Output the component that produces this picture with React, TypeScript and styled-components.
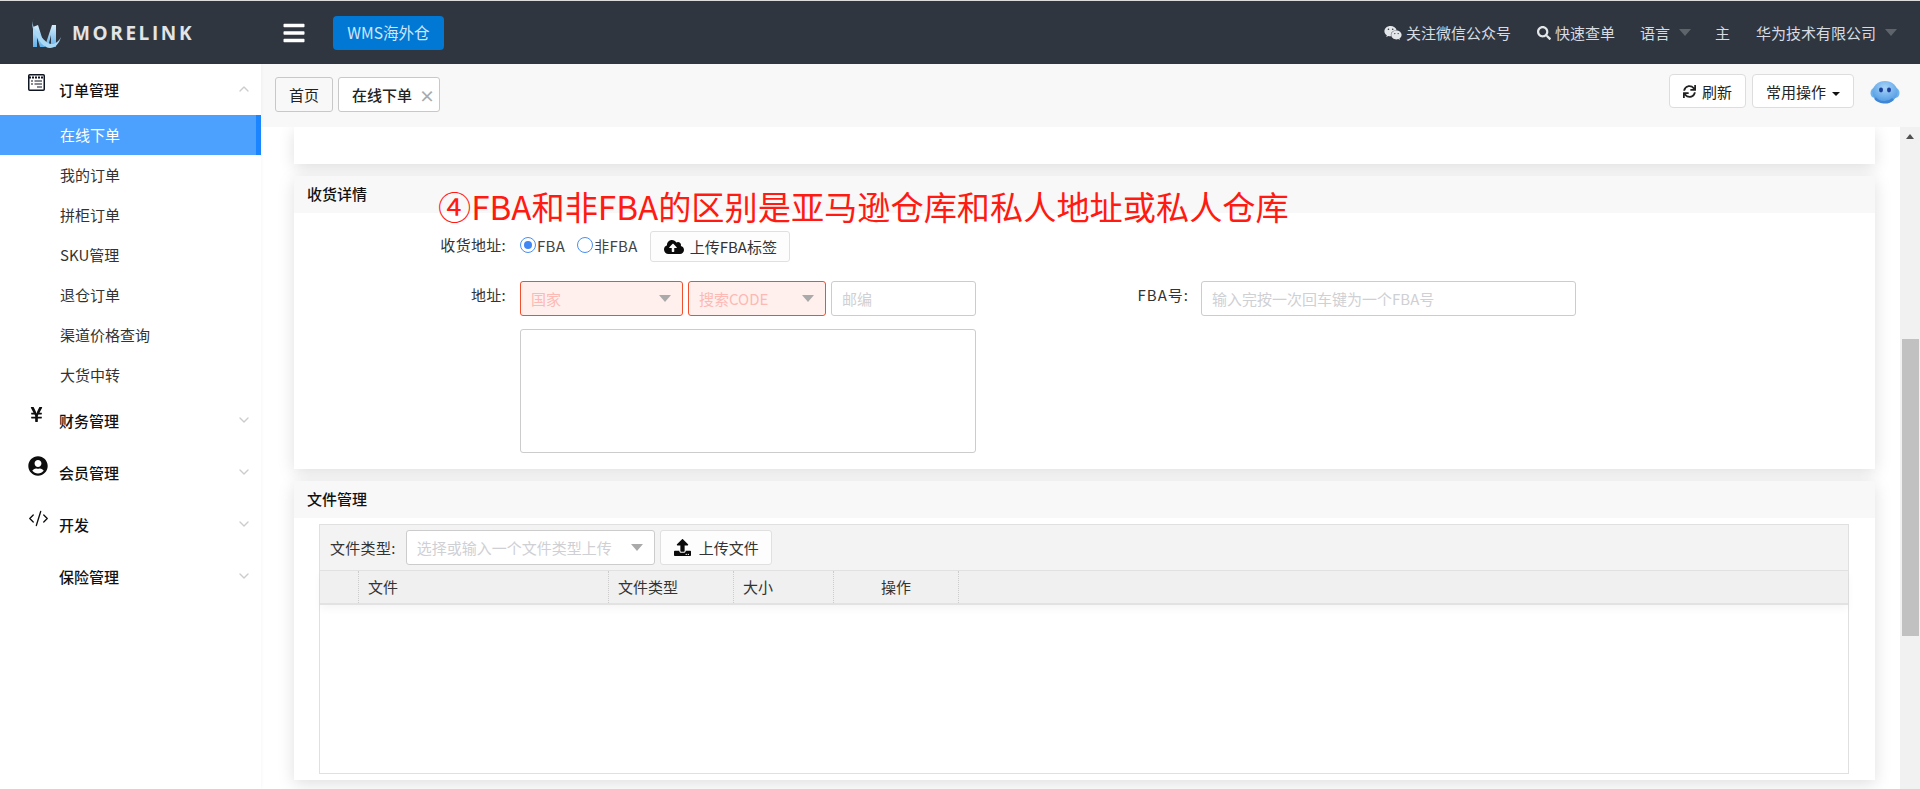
import { FC, ReactNode } from "react";
import styled, { createGlobalStyle } from "styled-components";
import {
  FaBars,
  FaCloudUploadAlt,
  FaSearch,
  FaSync,
  FaUpload,
  FaUserCircle,
  FaWeixin,
  FaYenSign,
} from "react-icons/fa";
import { ChevronDown, ChevronUp, CodeXml } from "lucide-react";

const GlobalStyle = createGlobalStyle`
  html, body {
    margin: 0;
    padding: 0;
    background: #fff;
  }
  body {
    font-family: "Noto Sans CJK SC", "Liberation Sans", sans-serif;
    font-size: 15px;
    color: #333;
    overflow: hidden;
  }
  * {
    box-sizing: border-box;
  }
`;

const Page = styled.div`
  width: 1920px;
  height: 789px;
  display: flex;
  flex-direction: column;
  overflow: hidden;
`;

const TopBar = styled.header`
  height: 64px;
  flex: none;
  display: flex;
  align-items: center;
  background: #2f3640;
  border-top: 1px solid #dcdcdc;
  color: #d8dce2;
`;

const Brand = styled.div`
  width: 282px;
  display: flex;
  align-items: center;
  padding-left: 30px;
  gap: 10px;
`;

const BrandName = styled.span`
  font-family: "Open Sans", "Liberation Sans", sans-serif;
  font-weight: 700;
  font-size: 19px;
  letter-spacing: 2.6px;
  line-height: 24px;
  color: #e2e4e6;
`;

const Burger = styled.div`
  width: 51px;
  display: flex;
  color: #fff;
  font-size: 24px;
`;

const WarehouseButton = styled.div`
  width: 111px;
  height: 34px;
  line-height: 33px;
  font-size: 15.6px;
  text-align: center;
  background: #0078d4;
  border-radius: 4px;
  color: #cfe6fb;
`;

const TopLinks = styled.nav`
  margin-left: auto;
  display: flex;
  align-items: center;
  padding-right: 23px;
`;

const TopLink = styled.span<{ $gap: number }>`
  display: flex;
  align-items: center;
  gap: 4px;
  line-height: 22px;
  margin-left: ${(p) => p.$gap}px;
  white-space: nowrap;

  svg {
    color: #e4e7ea;
  }
`;

const TopCaret = styled.i`
  width: 0;
  height: 0;
  margin-left: 5px;
  border-left: 6px solid transparent;
  border-right: 6px solid transparent;
  border-top: 7px solid #5f646b;
`;

const Body = styled.div`
  flex: 1;
  display: flex;
  min-height: 0;
`;

const SideNav = styled.aside`
  width: 261px;
  flex: none;
  background: #fff;
  box-shadow: 1px 0 3px rgba(0, 0, 0, 0.03);
  z-index: 1;
`;

const GroupRow = styled.div<{ $first?: boolean }>`
  height: ${(p) => (p.$first ? 51 : 52)}px;
  display: flex;
  align-items: center;
  padding: 0 9px 0 28px;
  color: #111;
  font-weight: 500;
  line-height: 20px;

  > svg {
    color: #ccc;
    margin-left: auto;
    margin-bottom: 2px;
  }
`;

const GroupIcon = styled.span`
  width: 31px;
  height: 20px;
  flex: none;
  display: flex;
  align-items: center;
  margin-bottom: 14px;
  color: #0d0d0d;
`;

const NavItem = styled.div<{ $active?: boolean }>`
  height: 40px;
  line-height: 40px;
  padding-left: 60px;
  color: ${(p) => (p.$active ? "#fff" : "#333")};
  background: ${(p) => (p.$active ? "#4ba1fd" : "transparent")};
  border-right: ${(p) => (p.$active ? "5px solid #1a85ff" : "none")};
`;

const Main = styled.main`
  flex: 1;
  min-width: 0;
  display: flex;
  flex-direction: column;
`;

const TabBar = styled.div`
  height: 63px;
  flex: none;
  display: flex;
  align-items: flex-start;
  padding: 13px 20px 0 14px;
  background: #f8f8f8;
`;

const Tab = styled.div<{ $active?: boolean }>`
  height: 35px;
  display: flex;
  align-items: center;
  gap: 7px;
  padding: 0 ${(p) => (p.$active ? 4 : 13)}px 0 13px;
  margin-right: 5px;
  border: 1px solid #c8c8c8;
  border-radius: 3px;
  background: ${(p) => (p.$active ? "#fff" : "#f8f8f8")};
  color: #222;
  font-weight: ${(p) => (p.$active ? 500 : 400)};
`;

const TabClose = styled.span`
  color: #aaa;
  font-size: 16px;
  line-height: 20px;
  font-weight: 700;
`;

const TabActions = styled.div`
  margin-left: auto;
  display: flex;
  align-items: flex-start;
  gap: 6px;
  margin-top: -3px;
`;

const ActionButton = styled.div`
  height: 34px;
  display: flex;
  align-items: center;
  gap: 6px;
  padding: 0 13px;
  background: #fff;
  border: 1px solid #ddd;
  border-radius: 4px;
  color: #222;
`;

const SmallCaret = styled.i`
  width: 0;
  height: 0;
  margin-top: 5px;
  border-left: 4px solid transparent;
  border-right: 4px solid transparent;
  border-top: 4px solid #111;
`;

const BotWrap = styled.div`
  margin: 6px 0 0 10px;
  display: flex;
`;

const Viewport = styled.div`
  flex: 1;
  min-height: 0;
  display: flex;
`;

const Content = styled.div`
  flex: 1;
  min-width: 0;
  padding: 0 25px 0 33px;
  overflow: hidden;
  display: flex;
  flex-direction: column;
  gap: 12px;
`;

const Card = styled.section<{ $height?: number }>`
  position: relative;
  flex: none;
  background: #fff;
  box-shadow: 0 4px 16px rgba(0, 0, 0, 0.13);
  height: ${(p) => (p.$height ? `${p.$height}px` : "auto")};
`;

const CardHeader = styled.div`
  height: 37px;
  line-height: 35px;
  padding-left: 13px;
  background: #f8f8f8;
  color: #111;
  font-weight: 500;
`;

const Annotation = styled.div`
  position: absolute;
  left: 144px;
  top: 5px;
  color: #ff1a12;
  font-size: 33.2px;
  line-height: 50px;
  white-space: nowrap;
`;

const FormBody = styled.div`
  padding: 18px 0 16px;
`;

const FormRow = styled.div<{ $last?: boolean }>`
  display: flex;
  align-items: flex-start;
  margin-bottom: ${(p) => (p.$last ? 0 : 19)}px;
`;

const FieldLabel = styled.label`
  width: 212px;
  flex: none;
  text-align: right;
  line-height: 28px;
  letter-spacing: 0.3px;
  color: #333;
  white-space: nowrap;
`;

const RadioGroup = styled.div`
  display: flex;
  align-items: center;
  height: 28px;
  margin-left: 14px;
`;

const RadioOption = styled.span`
  display: flex;
  align-items: center;
  margin-right: 12px;
  letter-spacing: 0.3px;
  color: #444;
`;

const RadioDot = styled.i<{ $on?: boolean }>`
  width: 16px;
  height: 16px;
  margin-right: 1px;
  border: 1px solid #4a8ff0;
  border-radius: 50%;
  display: flex;
  align-items: center;
  justify-content: center;

  &::after {
    content: "";
    width: 8px;
    height: 8px;
    border-radius: 50%;
    background: ${(p) => (p.$on ? "#3f87f5" : "transparent")};
  }
`;

const GhostButton = styled.div<{ $tall?: boolean }>`
  height: ${(p) => (p.$tall ? 35 : 31)}px;
  display: flex;
  align-items: center;
  gap: ${(p) => (p.$tall ? 8 : 6)}px;
  padding: 0 12px 0 13px;
  background: #fdfdfd;
  border: 1px solid #e0e0e0;
  border-radius: 3px;
  color: #333;

  svg {
    color: #0a0a0a;
  }
`;

const AddressFields = styled.div`
  width: 456px;
  margin-left: 14px;
  flex: none;
  display: flex;
  flex-wrap: wrap;
  gap: 13px 5px;
`;

const SelectBox = styled.div<{ $width: number; $error?: boolean }>`
  width: ${(p) => p.$width}px;
  height: 35px;
  display: flex;
  align-items: center;
  justify-content: space-between;
  padding: 0 11px 0 10px;
  background: ${(p) => (p.$error ? "#fff0ee" : "#fff")};
  border: 1px solid ${(p) => (p.$error ? "#f0502e" : "#ccc")};
  border-radius: 3px;
  color: ${(p) => (p.$error ? "#fdb9b4" : "#cfd0d4")};
  white-space: nowrap;
`;

const SelectCaret = styled.i`
  width: 0;
  height: 0;
  flex: none;
  border-left: 6px solid transparent;
  border-right: 6px solid transparent;
  border-top: 7px solid #aaa;
`;

const TextField = styled.input<{ $width: number }>`
  width: ${(p) => p.$width}px;
  height: 35px;
  padding: 0 10px;
  border: 1px solid #ccc;
  border-radius: 3px;
  font: inherit;
  outline: none;

  &::placeholder {
    color: #cfd0d4;
    opacity: 1;
  }
`;

const AddressText = styled.textarea`
  width: 456px;
  height: 124px;
  border: 1px solid #ccc;
  border-radius: 3px;
  resize: none;
  outline: none;
`;

const FbaLabel = styled(FieldLabel)`
  width: 213px;
  margin-right: 12px;
  letter-spacing: 1px;
`;

const FileBody = styled.div`
  padding: 6px 26px 6px 25px;
`;

const FileTable = styled.div`
  height: 250px;
  border: 1px solid #e0e0e0;
`;

const FileToolbar = styled.div`
  height: 46px;
  display: flex;
  align-items: center;
  gap: 5px;
  padding: 0 0 0 10px;
  background: #f3f3f3;
  border-bottom: 1px solid #e2e2e2;
`;

const ToolbarLabel = styled.span`
  margin-right: 5px;
  line-height: 28px;
  letter-spacing: 0.3px;
  color: #333;
`;

const HeadRow = styled.div`
  height: 34px;
  display: grid;
  grid-template-columns: 39px 250px 125px 100px 125px 1fr;
  background: #f0f0f0;
  border-bottom: 2px solid #e2e2e2;
  box-shadow: 0 4px 8px rgba(0, 0, 0, 0.04);
`;

const HeadCell = styled.div<{ $center?: boolean }>`
  line-height: 31px;
  padding-left: ${(p) => (p.$center ? 0 : 9)}px;
  text-align: ${(p) => (p.$center ? "center" : "left")};
  border-right: 1px dotted #ccc;
  color: #333;

  &:last-child {
    border-right: none;
  }
`;

const ScrollTrack = styled.div`
  width: 20px;
  flex: none;
  background: #f1f1f1;
`;

const ScrollArrow = styled.i`
  display: block;
  width: 0;
  height: 0;
  margin: 7px 0 0 6px;
  border-left: 4.5px solid transparent;
  border-right: 4.5px solid transparent;
  border-bottom: 5px solid #505050;
`;

const ScrollThumb = styled.div`
  width: 17px;
  height: 297px;
  margin: 200px 0 0 2px;
  background: #c1c1c1;
`;

const LogoMark: FC = () => (
  <svg width="32" height="32" viewBox="0 0 32 32">
    <defs>
      <linearGradient id="logo-m" x1="0" y1="0" x2="0" y2="1">
        <stop offset="0" stopColor="#d5ecfb" />
        <stop offset="1" stopColor="#5fb0ea" />
      </linearGradient>
    </defs>
    <path d="M3 10 L8 8 L15 30 L10 30 L7 20 L7 30 L3 30 Z" fill="url(#logo-m)" />
    <path d="M16 26 L22 8 L26 8 L26 30 L21 30 L21 18 L18 30 Z" fill="url(#logo-m)" />
    <path
      d="M5 0 C0 6 4 12 9 17 C13 22 18 28 23 27 C26 26.5 29 24 31 20 C29 27 25 31 20 31 C14 31 9 24 5 17 C2 11 1 5 5 0 Z"
      fill="#a9d8f5"
    />
  </svg>
);

const OrderIcon: FC = () => (
  <svg width="17" height="17" viewBox="0 0 17 17" fill="none" stroke="#101522">
    <rect x="0.75" y="0.75" width="15.5" height="15.5" rx="1" strokeWidth="1.5" />
    <path d="M1 3.5 H16" strokeWidth="2" strokeDasharray="2 1" />
    <path d="M3 7 H5 M6.5 7 H14 M3 10 H5 M6.5 10 H14 M9 13 H14" strokeWidth="1.2" />
  </svg>
);

const BotIcon: FC = () => (
  <svg width="30" height="26" viewBox="0 0 30 26">
    <defs>
      <radialGradient id="bot-face" cx="0.5" cy="0.3" r="0.8">
        <stop offset="0" stopColor="#a8d4f8" />
        <stop offset="1" stopColor="#3f8fe0" />
      </radialGradient>
    </defs>
    <ellipse cx="4.5" cy="13" rx="4" ry="5" fill="#6db3ee" />
    <ellipse cx="25.5" cy="13" rx="4" ry="5" fill="#6db3ee" />
    <ellipse cx="15" cy="12" rx="12.5" ry="11" fill="url(#bot-face)" />
    <ellipse cx="11" cy="10" rx="2" ry="2.4" fill="#1c3f9a" />
    <ellipse cx="19" cy="10" rx="2" ry="2.4" fill="#1c3f9a" />
    <path d="M5 18 C9 23 18 24 23 19" fill="none" stroke="#3f86d4" strokeWidth="2.5" />
  </svg>
);

interface GroupProps {
  icon?: ReactNode;
  label: string;
  open?: boolean;
  first?: boolean;
}

const NavGroup: FC<GroupProps> = ({ icon, label, open, first }) => (
  <GroupRow $first={first}>
    <GroupIcon>{icon}</GroupIcon>
    {label}
    {open ? <ChevronUp size={16} /> : <ChevronDown size={16} />}
  </GroupRow>
);

const subItems = ["我的订单", "拼柜订单", "SKU管理", "退仓订单", "渠道价格查询", "大货中转"];

const App: FC = () => {
  return (
    <Page>
      <GlobalStyle />
      <TopBar>
        <Brand>
          <LogoMark />
          <BrandName>MORELINK</BrandName>
        </Brand>
        <Burger>
          <FaBars />
        </Burger>
        <WarehouseButton>WMS海外仓</WarehouseButton>
        <TopLinks>
          <TopLink $gap={0}>
            <FaWeixin size={18} />
            关注微信公众号
          </TopLink>
          <TopLink $gap={26}>
            <FaSearch size={14} />
            快速查单
          </TopLink>
          <TopLink $gap={25}>
            语言
            <TopCaret />
          </TopLink>
          <TopLink $gap={24}>主</TopLink>
          <TopLink $gap={26}>
            华为技术有限公司
            <TopCaret />
          </TopLink>
        </TopLinks>
      </TopBar>
      <Body>
        <SideNav>
          <NavGroup first open icon={<OrderIcon />} label="订单管理" />
          <NavItem $active>在线下单</NavItem>
          {subItems.map((item) => (
            <NavItem key={item}>{item}</NavItem>
          ))}
          <NavGroup icon={<FaYenSign size={17} />} label="财务管理" />
          <NavGroup icon={<FaUserCircle size={20} />} label="会员管理" />
          <NavGroup icon={<CodeXml size={21} strokeWidth={1.5} />} label="开发" />
          <NavGroup label="保险管理" />
        </SideNav>
        <Main>
          <TabBar>
            <Tab>首页</Tab>
            <Tab $active>
              在线下单
              <TabClose>×</TabClose>
            </Tab>
            <TabActions>
              <ActionButton>
                <FaSync size={13} />
                刷新
              </ActionButton>
              <ActionButton>
                常用操作
                <SmallCaret />
              </ActionButton>
              <BotWrap>
                <BotIcon />
              </BotWrap>
            </TabActions>
          </TabBar>
          <Viewport>
            <Content>
              <Card $height={37} />
              <Card>
                <CardHeader>收货详情</CardHeader>
                <Annotation>④FBA和非FBA的区别是亚马逊仓库和私人地址或私人仓库</Annotation>
                <FormBody>
                  <FormRow>
                    <FieldLabel>收货地址:</FieldLabel>
                    <RadioGroup>
                      <RadioOption>
                        <RadioDot $on />
                        FBA
                      </RadioOption>
                      <RadioOption>
                        <RadioDot />
                        非FBA
                      </RadioOption>
                    </RadioGroup>
                    <GhostButton>
                      <FaCloudUploadAlt size={20} />
                      上传FBA标签
                    </GhostButton>
                  </FormRow>
                  <FormRow $last>
                    <FieldLabel>地址:</FieldLabel>
                    <AddressFields>
                      <SelectBox $width={163} $error>
                        国家
                        <SelectCaret />
                      </SelectBox>
                      <SelectBox $width={138} $error>
                        搜索CODE
                        <SelectCaret />
                      </SelectBox>
                      <TextField $width={145} placeholder="邮编" />
                      <AddressText />
                    </AddressFields>
                    <FbaLabel>FBA号:</FbaLabel>
                    <TextField $width={375} placeholder="输入完按一次回车键为一个FBA号" />
                  </FormRow>
                </FormBody>
              </Card>
              <Card>
                <CardHeader>文件管理</CardHeader>
                <FileBody>
                  <FileTable>
                    <FileToolbar>
                      <ToolbarLabel>文件类型:</ToolbarLabel>
                      <SelectBox $width={249}>
                        选择或输入一个文件类型上传
                        <SelectCaret />
                      </SelectBox>
                      <GhostButton $tall>
                        <FaUpload size={17} />
                        上传文件
                      </GhostButton>
                    </FileToolbar>
                    <HeadRow>
                      <HeadCell />
                      <HeadCell>文件</HeadCell>
                      <HeadCell>文件类型</HeadCell>
                      <HeadCell>大小</HeadCell>
                      <HeadCell $center>操作</HeadCell>
                      <HeadCell />
                    </HeadRow>
                  </FileTable>
                </FileBody>
              </Card>
            </Content>
            <ScrollTrack>
              <ScrollArrow />
              <ScrollThumb />
            </ScrollTrack>
          </Viewport>
        </Main>
      </Body>
    </Page>
  );
};

export default App;
